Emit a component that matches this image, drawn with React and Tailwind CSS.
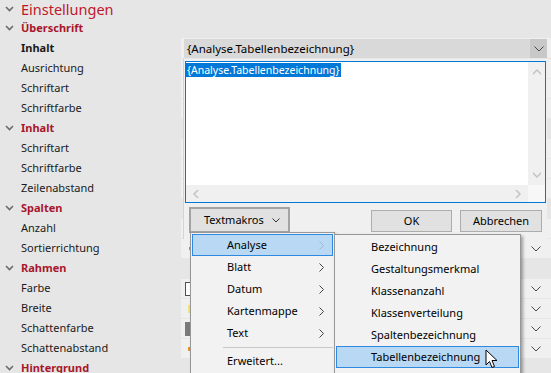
import React from 'react';

const rows = [
  { label: 'Überschrift', group: true },
  { label: 'Inhalt', bold: true, combo: true },
  { label: 'Ausrichtung', drop: true },
  { label: 'Schriftart', drop: true },
  { label: 'Schriftfarbe', drop: true },
  { label: 'Inhalt', group: true },
  { label: 'Schriftart', drop: true },
  { label: 'Schriftfarbe', drop: true },
  { label: 'Zeilenabstand', drop: true },
  { label: 'Spalten', group: true },
  { label: 'Anzahl', drop: true },
  { label: 'Sortierrichtung', drop: true, swatch: 'dot' },
  { label: 'Rahmen', group: true },
  { label: 'Farbe', drop: true, swatch: 'white' },
  { label: 'Breite', drop: true, swatch: 'yellow' },
  { label: 'Schattenfarbe', drop: true, swatch: 'gray' },
  { label: 'Schattenabstand', drop: true, swatch: 'orange' },
  { label: 'Hintergrund', group: true },
];

const GroupChevron = () => (
  <svg width="9" height="6" viewBox="0 0 9 6" className="shrink-0">
    <polyline points="1,1 4.5,4.5 8,1" fill="none" stroke="#6b6b6b" strokeWidth="1.6" />
  </svg>
);

const DropChevron = ({ color = '#4a4a4a' }) => (
  <svg width="10" height="6" viewBox="0 0 10 6" className="shrink-0">
    <polyline points="0.5,0.5 5,5 9.5,0.5" fill="none" stroke={color} strokeWidth="1" />
  </svg>
);

const MenuArrow = ({ color = '#333' }) => (
  <svg width="5" height="9" viewBox="0 0 5 9" className="shrink-0">
    <polyline points="0.5,0.5 4.5,4.5 0.5,8.5" fill="none" stroke={color} strokeWidth="1" />
  </svg>
);

// little grey scroll arrows, filled chevron shapes
const ScrollArrow = ({ dir }) => {
  const pts = {
    up: '0,5 4,1 8,5 8,7 4,3 0,7',
    down: '0,1 4,5 8,1 8,3 4,7 0,3',
    left: '5,0 1,4 5,8 7,8 3,4 7,0',
    right: '1,0 5,4 1,8 3,8 7,4 3,0',
  }[dir];
  return (
    <svg width="8" height="8" viewBox="0 0 8 8">
      <polygon points={pts} fill="#c2c2c2" />
    </svg>
  );
};

const Swatch = ({ kind }) => {
  if (kind === 'white') return <div className="w-[7px] h-[14px] border border-[#505050] bg-white" />;
  if (kind === 'gray') return <div className="w-[6px] h-[14px] bg-[#7a7a7a]" />;
  if (kind === 'yellow') return <div className="ml-[3px] w-[3px] h-[8px] bg-[#f3e27a]" />;
  if (kind === 'orange') return <div className="ml-[3px] w-[3px] h-[4px] bg-[#e8902a]" />;
  if (kind === 'dot') return <div className="ml-[4px] w-[3px] h-[3px] bg-[#e07a2a]" />;
  return null;
};

const ValueCell = ({ row }) => {
  if (row.group) return <div className="flex-1" />;
  if (row.combo) {
    return (
      <div className="flex-1 h-[20px] pt-[1px] pl-[3px] pr-[4px] bg-[#efefef]">
        <div className="h-[19px] flex items-center bg-[#d9d9d9]">
          <span className="flex-1 pl-[3px] text-[11.5px] text-black">{'{Analyse.Tabellenbezeichnung}'}</span>
          <div className="w-[17px] h-full bg-[#c8c8c8] flex items-center justify-center">
            <DropChevron />
          </div>
        </div>
      </div>
    );
  }
  return (
    <div className="flex-1 mt-[1px] h-[19px] bg-[#f0f0f0] flex items-center pl-[4px] pr-[10px]">
      <Swatch kind={row.swatch} />
      <div className="flex-1" />
      {row.drop && <DropChevron />}
    </div>
  );
};

const Row = ({ row }) => (
  <div className="flex h-[20px]">
    <div className="w-[181px] flex items-center">
      <div className="w-[21px] flex justify-center pr-[3px]">{row.group && <GroupChevron />}</div>
      <span
        className={
          row.group
            ? 'text-[11px] font-bold text-[#a8172b]'
            : row.bold
            ? 'text-[11px] font-bold text-[#1a1a1a]'
            : 'text-[11px] text-[#1a1a1a]'
        }
      >
        {row.label}
      </span>
    </div>
    <ValueCell row={row} />
  </div>
);

const mainItems = [
  { label: 'Analyse', sub: true, active: true },
  { label: 'Blatt', sub: true },
  { label: 'Datum', sub: true },
  { label: 'Kartenmappe', sub: true },
  { label: 'Text', sub: true },
  { sep: true },
  { label: 'Erweitert...' },
];

const subItems = [
  'Bezeichnung',
  'Gestaltungsmerkmal',
  'Klassenanzahl',
  'Klassenverteilung',
  'Spaltenbezeichnung',
  'Tabellenbezeichnung',
];

const Cursor = () => (
  <svg width="13" height="20" viewBox="0 0 13 20" className="absolute left-[485px] top-[349px]">
    <path d="M1 1 L1 16 L4.5 12.5 L7 18.5 L9.5 17.5 L7 11.5 L12 11.5 Z" fill="white" stroke="black" strokeWidth="1" strokeLinejoin="miter" />
  </svg>
);

export default function App() {
  return (
    <div
      className="relative w-[551px] h-[373px] overflow-hidden bg-[#e6e6e6] text-black"
      style={{ fontFamily: '"Segoe UI", "Noto Sans", "Open Sans", sans-serif' }}
    >
      {/* title */}
      <div className="flex items-center h-[18px]">
        <div className="w-[21px] flex justify-center pr-[3px]">
          <GroupChevron />
        </div>
        <span className="text-[14.5px] leading-[18px] text-[#c0182b]">Einstellungen</span>
      </div>

      {rows.map((r, i) => (
        <Row key={i} row={r} />
      ))}

      {/* Text editor popup */}
      <div className="absolute left-[183px] top-[59px] w-[364px] h-[180px] bg-[#f0f0f0] border-l border-[#d4d4d4]">
        <div className="ml-[1px] mt-[2px] w-[361px] h-[142px] border border-[#0078d7] bg-white flex flex-col">
          <div className="flex flex-1">
            <div className="flex-1 pt-[1px]">
              <div className="w-fit bg-[#0078d7] text-white text-[10.5px] leading-[14px] px-[1px]">
                {'{Analyse.Tabellenbezeichnung}'}
              </div>
            </div>
            <div className="w-[17px] bg-[#f0f0f0] flex flex-col items-center justify-between py-[6px]">
              <ScrollArrow dir="up" />
              <ScrollArrow dir="down" />
            </div>
          </div>
          <div className="h-[17px] flex">
            <div className="flex-1 bg-[#f0f0f0] flex items-center justify-between px-[6px]">
              <ScrollArrow dir="left" />
              <ScrollArrow dir="right" />
            </div>
            <div className="w-[17px] bg-[#f7f7f7]" />
          </div>
        </div>

        <div className="flex items-start mt-[4px]">
          <div className="ml-[5px] w-[101px] h-[26px] border-2 border-[#a3a3a3] bg-[#e1e1e1] flex items-center">
            <span className="pl-[13px] text-[11px]">Textmakros</span>
            <div className="flex-1" />
            <div className="pr-[8px] pt-[1px]">
              <svg width="8" height="5" viewBox="0 0 8 5">
                <polyline points="0.5,0.5 4,4 7.5,0.5" fill="none" stroke="#333" strokeWidth="1" />
              </svg>
            </div>
          </div>
          <div className="ml-[81px] mt-[3px] w-[81px] h-[22px] border border-[#adadad] bg-[#e1e1e1] flex items-center justify-center text-[11px]">
            OK
          </div>
          <div className="ml-[8px] mt-[3px] w-[82px] h-[22px] border border-[#adadad] bg-[#e1e1e1] flex items-center justify-center text-[11px]">
            Abbrechen
          </div>
        </div>
      </div>

      {/* Textmakros menu */}
      <div className="absolute left-[190px] top-[232px] w-[145px] h-[150px] border border-[#979797] bg-[#f2f2f2] p-[1px] shadow-[2px_2px_3px_rgba(0,0,0,0.3)]">
        {mainItems.map((it, i) =>
          it.sep ? (
            <div key={i} className="h-[6px] flex items-center pl-[31px]">
              <div className="h-[1px] flex-1 bg-[#c8c8c8]" />
            </div>
          ) : (
            <div
              key={i}
              className={
                it.active
                  ? 'h-[22px] flex items-center pl-[34px] pr-[8px] border border-[#2d8ae0] bg-[#b8d8f4]'
                  : 'h-[22px] flex items-center pl-[35px] pr-[9px]'
              }
            >
              <span className="flex-1 text-[11px]">{it.label}</span>
              {it.sub && <MenuArrow color={it.active ? '#9bb8d2' : '#444'} />}
            </div>
          )
        )}
      </div>

      {/* Analyse submenu */}
      <div className="absolute left-[334px] top-[234px] w-[187px] h-[150px] border border-[#979797] bg-[#f2f2f2] p-[1px] shadow-[2px_2px_3px_rgba(0,0,0,0.35)]">
        {subItems.map((s, i) => (
          <div
            key={i}
            className={
              i === subItems.length - 1
                ? 'h-[22px] flex items-center pl-[34px] border border-[#2d8ae0] bg-[#b8d8f4]'
                : 'h-[22px] flex items-center pl-[35px]'
            }
          >
            <span className="text-[11px]">{s}</span>
          </div>
        ))}
      </div>

      <Cursor />
    </div>
  );
}
